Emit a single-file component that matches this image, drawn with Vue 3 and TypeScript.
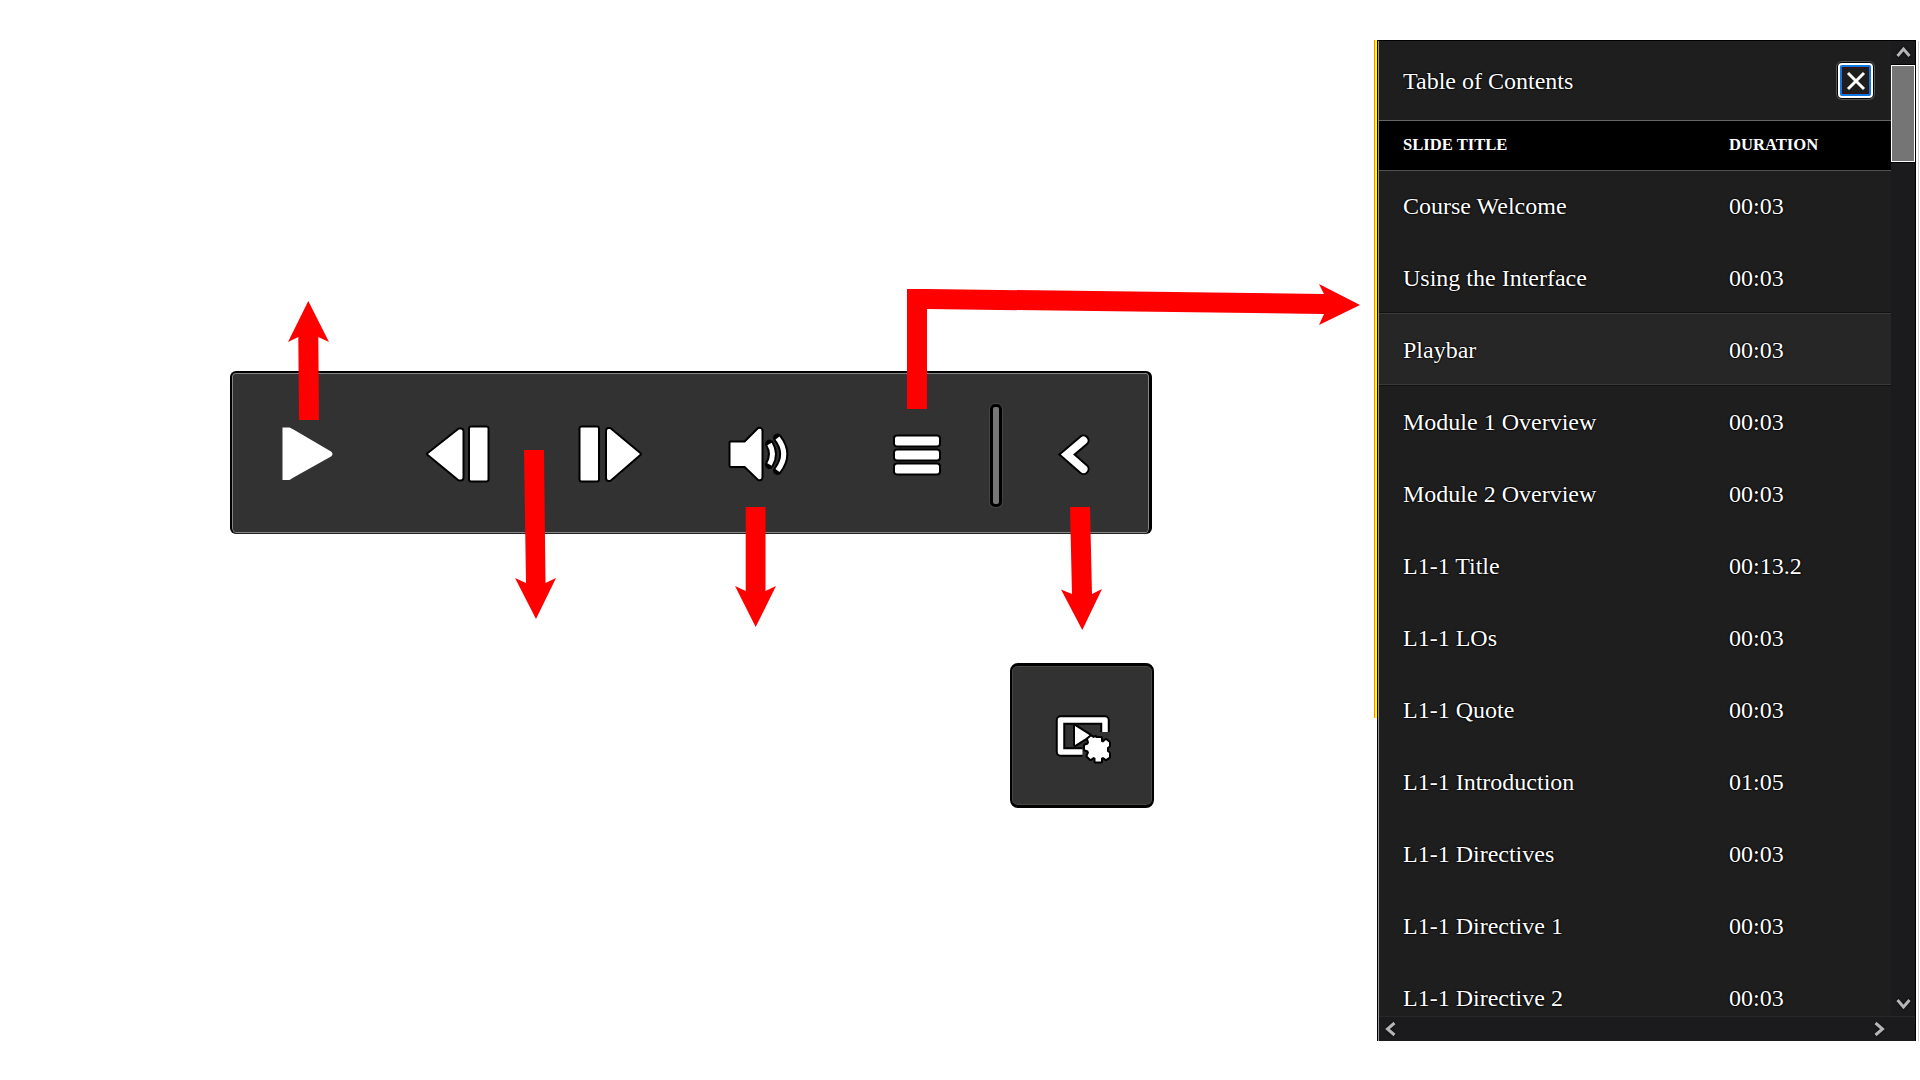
<script setup lang="ts">
interface Slide {
  title: string
  duration: string
}

const slides: Slide[] = [
  { title: 'Course Welcome', duration: '00:03' },
  { title: 'Using the Interface', duration: '00:03' },
  { title: 'Playbar', duration: '00:03' },
  { title: 'Module 1 Overview', duration: '00:03' },
  { title: 'Module 2 Overview', duration: '00:03' },
  { title: 'L1-1 Title', duration: '00:13.2' },
  { title: 'L1-1 LOs', duration: '00:03' },
  { title: 'L1-1 Quote', duration: '00:03' },
  { title: 'L1-1 Introduction', duration: '01:05' },
  { title: 'L1-1 Directives', duration: '00:03' },
  { title: 'L1-1 Directive 1', duration: '00:03' },
  { title: 'L1-1 Directive 2', duration: '00:03' },
]
const current = 2

const arrows: string[] = [
  '308.3,301 329,342 318.3,337 319,420 299,420 298.3,337 288,342',
  '524,450 544,450 545.5,583 556,578 536,619 515,578 526,583',
  '745.7,507 765.5,507 765.5,591 776,586 755.7,627 735,586 745.7,591',
  '907,289 927,289 1324,294 1319,284 1360,305 1319,325 1324,314 927,309 927,409 907,409',
  '1070,507 1090,507 1092,594 1102,589 1082.3,630 1061,589.5 1072,594',
]
</script>

<template>
  <div class="page">
    <main class="stage">
      <div class="playbar">
        <svg class="glyph" width="150" height="157" viewBox="233 374 150 157">
          <path d="M282.500 427.500h7l4 2 37.500 22q3 2.500 0 5l-37.500 21-4 2.500h-7z" />
        </svg>
        <svg class="glyph outlined" width="150" height="157" viewBox="383 374 150 157">
          <path d="M428 454l31-24.500h2q1.500 0 1.500 2v46q0 2-1.500 2h-2z" />
          <rect x="470" y="427.500" width="17.500" height="53" rx="1" />
        </svg>
        <svg class="glyph outlined" width="150" height="157" viewBox="533 374 150 157">
          <rect x="580.500" y="427.500" width="17.500" height="53" rx="1" />
          <path d="M640 454l-30-25h-1.500q-1.500 0-1.500 2v47q0 2 1.500 2h1.500z" />
        </svg>
        <svg class="glyph outlined" width="150" height="157" viewBox="683 374 150 157">
          <path class="wave-edge" d="M769.500 444q6 10 0 20.500M777.500 438q12.500 16 0 32.500" />
          <path d="M730.500 442.500H745L758.500 429q3-1 3 2v46q0 3-3 2L745 466h-14.500z" />
          <path class="wave" d="M769.500 444q6 10 0 20.500M777.500 438q12.500 16 0 32.500" />
        </svg>
        <svg class="glyph outlined" width="145" height="157" viewBox="833 374 145 157">
          <rect x="895" y="436.500" width="44" height="9" rx="2" />
          <rect x="895" y="450.500" width="44" height="9" rx="2" />
          <rect x="895" y="464.500" width="44" height="9" rx="2" />
        </svg>
        <span class="divider"></span>
        <svg class="glyph" width="140" height="157" viewBox="1008 374 140 157">
          <path class="chev-edge" d="M1083.500 440.500L1067 454.500l16.500 14.500" />
          <path class="chev" d="M1083.500 440.500L1067 454.500l16.500 14.500" />
        </svg>
      </div>
      <div class="settings">
        <svg class="glyph" width="64" height="60" viewBox="1050 707 64 60">
          <path class="screen-edge" d="M1105 733v-12h-44.500v32h22" />
          <path class="screen" d="M1105 733v-12h-44.500v32h22" />
          <path class="rim" d="M1075 727v19l15-9.500z" />
          <path class="rim" d="M1095.500 739h5.500v3.500l2 1 3-2.500 3 2.500v3.500l-2 1.500v4l2 1.500v4l-3 2-3-2-2 1v3.500h-5.500v-3.500l-2-1-3 2-3-3 1.500-3.500-1-2-3-1v-4l3-1 1-2-1-3.500 3-2.500 2.500 1.500 2-1z" />
        </svg>
      </div>
    </main>

    <aside class="toc">
      <div class="toc-main">
        <header class="toc-head">
          <span class="heading">Table of Contents</span>
          <button class="close" aria-label="Close">
            <svg width="20" height="20" viewBox="0 0 20 20"><path d="M2 2l16 16M18 2L2 18" /></svg>
          </button>
        </header>
        <div class="cols">
          <span class="c-title">SLIDE TITLE</span>
          <span>DURATION</span>
        </div>
        <div class="rows">
          <div v-for="(s, i) in slides" :key="s.title" class="row" :class="{ active: i === current }">
            <span class="c-title">{{ s.title }}</span>
            <span>{{ s.duration }}</span>
          </div>
        </div>
        <div class="hbar">
          <svg width="25" height="24" viewBox="0 0 25 24"><path d="M15.500 6L8.500 12l7 6" /></svg>
          <svg width="25" height="24" viewBox="0 0 25 24"><path d="M9.500 6l7 6-7 6" /></svg>
        </div>
      </div>
      <div class="vbar">
        <svg width="24" height="24" viewBox="0 0 24 24"><path d="M6.500 15l6-7 6 7" /></svg>
        <span class="thumb"></span>
        <svg class="down" width="24" height="25" viewBox="0 0 24 25"><path d="M6.500 9l6 7 6-7" /></svg>
        <span class="corner"></span>
      </div>
    </aside>

    <svg class="callouts" width="1920" height="1080" viewBox="0 0 1920 1080">
      <polygon v-for="p in arrows" :key="p" :points="p" />
    </svg>
  </div>
</template>

<style>
body {
  margin: 0;
  background: #fff;
}
</style>

<style scoped>
.page {
  position: relative;
  display: flex;
  justify-content: space-between;
  box-sizing: border-box;
  width: 1920px;
  height: 1080px;
  padding: 40px 4px 0 230px;
  overflow: hidden;
  background: #fff;
  font-family: 'Liberation Serif', 'Times New Roman', serif;
}

.stage {
  display: flex;
  flex-direction: column;
  align-items: flex-end;
  width: 924px;
  padding-top: 331px;
}

.playbar {
  display: flex;
  align-items: flex-start;
  align-self: flex-start;
  box-sizing: border-box;
  width: 922px;
  height: 163px;
  padding: 1px 0 0 1px;
  border: 2px solid #000;
  border-bottom: 1px solid #222;
  border-right-width: 3px;
  border-radius: 6px;
  background: #323232;
  box-shadow: inset 0 0 0 1px #858585;
}

.glyph {
  flex: none;
  fill: #fff;
}

.outlined path,
.outlined rect,
.rim {
  stroke: #000;
  stroke-width: 4px;
  paint-order: stroke;
  stroke-linejoin: round;
}

.glyph .wave,
.glyph .wave-edge {
  fill: none;
  stroke: #fff;
  stroke-width: 5px;
}

.glyph .wave-edge {
  stroke: #000;
  stroke-width: 9px;
  stroke-linecap: round;
}

.chev,
.chev-edge {
  fill: none;
  stroke: #fff;
  stroke-width: 8px;
  stroke-linecap: round;
}

.chev-edge {
  stroke: #000;
  stroke-width: 12px;
}

.divider {
  flex: none;
  box-sizing: border-box;
  width: 12px;
  height: 103px;
  margin: 30px 6px 0 12px;
  border: 3px solid #000;
  border-radius: 5px;
  background: #777;
  box-shadow: 0 0 0 1px #444;
}

.settings {
  display: flex;
  align-items: center;
  justify-content: center;
  box-sizing: border-box;
  width: 144px;
  height: 145px;
  margin-top: 129px;
  border: 2px solid #000;
  border-top-width: 3px;
  border-bottom-width: 3px;
  border-radius: 8px;
  background: #323232;
  box-shadow: inset 0 0 0 1px #42483f;
}

.screen,
.screen-edge {
  fill: none;
  stroke: #fff;
  stroke-width: 5.500px;
  stroke-linejoin: round;
}

.screen-edge {
  stroke: #000;
  stroke-width: 9.500px;
}

.toc {
  position: relative;
  display: flex;
  box-sizing: border-box;
  width: 539px;
  height: 1001px;
  border: 1px solid #000;
  border-bottom: 0;
  background: #1e1e1e;
  color: #fff;
  font-size: 24px;
}

/* highlight strip along the upper part of the panel's left edge */
.toc::before {
  content: '';
  position: absolute;
  top: -1px;
  left: -4px;
  width: 2px;
  height: 678px;
  border-left: 1px solid #ff7b32;
  background: #ff0;
}

.toc::after {
  content: '';
  position: absolute;
  top: 0;
  right: -4px;
  width: 1px;
  height: 1000px;
  background: #d0d0d0;
}

.toc-main {
  display: flex;
  flex-direction: column;
  box-sizing: border-box;
  width: 513px;
  border-left: 1px solid #999;
}

.toc-head {
  display: flex;
  flex: none;
  align-items: center;
  justify-content: space-between;
  box-sizing: border-box;
  height: 79px;
  padding: 0 18px 0 24px;
  text-shadow: 0 0 2px #000, 0 0 2px #000, 0 0 1px #000;
}

.heading {
  padding-top: 2px;
}

.close {
  display: flex;
  align-items: center;
  justify-content: center;
  box-sizing: border-box;
  width: 35px;
  height: 35px;
  padding: 0;
  border: 2px solid #fff;
  border-radius: 4px;
  background: #1e1e1e;
  box-shadow: inset 0 0 0 2px #0a78e0, inset 0 0 0 3px #401010, 0 0 0 1px #000, 0 0 0 2px #555;
}

.close svg {
  fill: none;
  stroke: #fff;
  stroke-width: 3px;
}

.cols {
  display: flex;
  flex: none;
  align-items: center;
  box-sizing: border-box;
  height: 51px;
  padding: 0 0 2px 24px;
  border-top: 1px solid #666;
  border-bottom: 1px solid #505050;
  background: #000;
  font-size: 16.600px;
  font-weight: 700;
}

.c-title {
  flex: none;
  width: 326px;
}

.rows {
  flex: none;
  height: 847px;
  margin-top: -2px;
  overflow: hidden;
}

.row {
  display: flex;
  align-items: center;
  box-sizing: border-box;
  height: 72px;
  padding: 2px 0 0 24px;
  text-shadow: 0 0 2px #000, 0 0 2px #000, 0 0 1px #000;
}

.row.active {
  border-top: 1px solid #3a3a3a;
  border-bottom: 1px solid #3a3a3a;
  background: #262626;
  box-shadow: 0 -1px #111, 0 1px #111;
}

.hbar {
  display: flex;
  flex: none;
  justify-content: space-between;
  box-sizing: border-box;
  height: 25px;
  border-top: 1px solid #28282a;
  background: #1b1b1d;
}

.vbar {
  display: flex;
  flex-direction: column;
  width: 24px;
  background: #1b1b1d;
}

.hbar svg,
.vbar svg {
  flex: none;
  fill: none;
  stroke: #b5b5b5;
  stroke-width: 3px;
  filter: drop-shadow(0 0 1px #000);
}

.thumb {
  box-sizing: border-box;
  height: 97px;
  border: 1px solid #fff;
  background: #757575;
  box-shadow: 0 -1px #000, 0 1px #000;
}

.vbar .down {
  margin-top: auto;
}

.corner {
  box-sizing: border-box;
  height: 25px;
  border-top: 1px solid #28282a;
}

.callouts {
  position: absolute;
  top: 0;
  left: 0;
  fill: #f00;
  pointer-events: none;
}
</style>
